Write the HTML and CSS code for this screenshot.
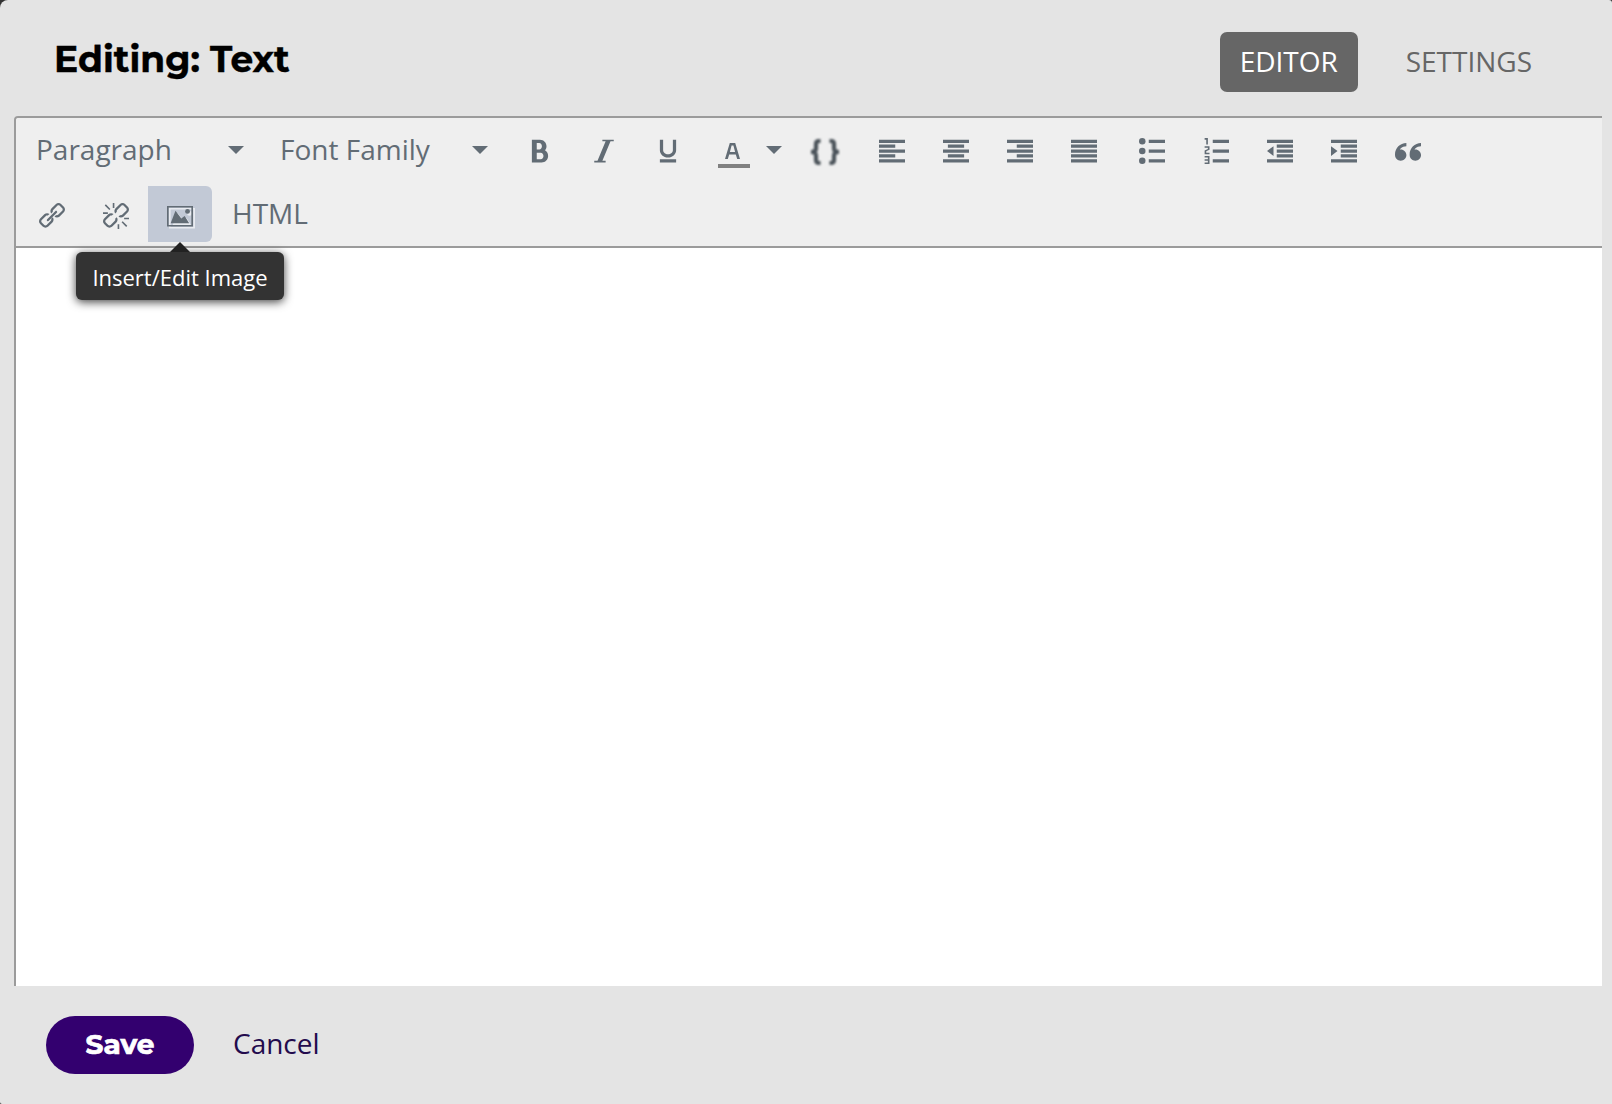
FILE: index.html
```html
<!DOCTYPE html>
<html lang="en">
<head>
<meta charset="utf-8">
<title>Editing: Text</title>
<link rel="stylesheet" href="styles.css">
</head>
<body>
<main class="modal">
  <header class="header">
    <h1 class="title">Editing: Text</h1>
    <nav class="tabs">
      <button class="tab active">EDITOR</button>
      <button class="tab">SETTINGS</button>
    </nav>
  </header>
  <section class="editor">
    <div class="toolbar">
      <div class="row formatting">
        <div class="group">
          <button class="listbox"><span>Paragraph</span><i class="caret"></i></button>
          <button class="listbox"><span>Font Family</span><i class="caret"></i></button>
          <button class="btn"><svg class="icon" viewBox="0 0 1024 1024"><path d="M707.88 484.652c37.498-44.542 60.12-102.008 60.12-164.652 0-141.16-114.842-256-256-256h-320v896h384c141.158 0 256-114.842 256-256 0-92.956-49.798-174.496-124.12-219.348zM384 192h101.5c55.968 0 101.5 57.42 101.5 128s-45.532 128-101.5 128h-101.5v-256zM543 832h-159v-256h159c58.45 0 106 57.42 106 128s-47.55 128-106 128z"/></svg></button>
          <button class="btn"><svg class="icon" viewBox="0 0 1024 1024"><path d="M896 64v64h-128l-320 768h128v64h-448v-64h128l320-768h-128v-64z"/></svg></button>
          <button class="btn"><svg class="icon" viewBox="0 0 1024 1024"><path d="M704 64h128v416c0 159.058-143.268 288-320 288-176.73 0-320-128.942-320-288v-416h128v416c0 40.166 18.238 78.704 51.354 108.506 36.896 33.204 86.846 51.494 140.646 51.494s103.75-18.29 140.646-51.494c33.116-29.802 51.354-68.34 51.354-108.506v-416zM192 832h640v128h-640z"/></svg></button>
          <button class="color-btn">
            <span class="swatch"><svg class="letter" viewBox="0 0 15 16"><path fill-rule="evenodd" d="M0 16L4.8 0h5.4L15 16h-2.8l-1.4-4.6H4.2L2.8 16zM4.9 8.9h5.2L8.4 2.6H6.6z"/></svg></span>
            <i class="caret"></i>
          </button>
          <button class="btn code"><svg class="braces" viewBox="0 0 30 26"><path d="M10.500 2H9Q6 2 6 5v4.500Q6 13 1 13Q6 13 6 16.500V21Q6 24 9 24h1.500M19.500 2H21q3 0 3 3v4.500Q24 13 29 13Q24 13 24 16.500V21q0 3-3 3h-1.500"/></svg></button>
        </div>
        <div class="group">
          <button class="btn"><svg class="icon" viewBox="0 0 16 16"><path d="M0 1h16v2H0zM0 4h10v2H0zM0 7h16v2H0zM0 10h10v2H0zM0 13h16v2H0z"/></svg></button>
          <button class="btn"><svg class="icon" viewBox="0 0 16 16"><path d="M0 1h16v2H0zM3 4h10v2H3zM0 7h16v2H0zM3 10h10v2H3zM0 13h16v2H0z"/></svg></button>
          <button class="btn"><svg class="icon" viewBox="0 0 16 16"><path d="M0 1h16v2H0zM6 4h10v2H6zM0 7h16v2H0zM6 10h10v2H6zM0 13h16v2H0z"/></svg></button>
          <button class="btn"><svg class="icon" viewBox="0 0 16 16"><path d="M0 1h16v2H0zM0 4h16v2H0zM0 7h16v2H0zM0 10h16v2H0zM0 13h16v2H0z"/></svg></button>
        </div>
        <div class="group">
          <button class="btn"><svg class="icon" viewBox="0 0 16 16"><path d="M6 1h10v2H6zM6 7h10v2H6zM6 13h10v2H6z"/><circle cx="2" cy="2" r="2"/><circle cx="2" cy="8" r="2"/><circle cx="2" cy="14" r="2"/></svg></button>
          <button class="btn"><svg class="icon" viewBox="0 0 1024 1024"><path d="M384 832h640v128h-640zM384 448h640v128h-640zM384 64h640v128h-640zM192 0v256h-64v-192h-64v-64zM128 526v50h128v64h-192v-146l128-60v-50h-128v-64h192v146zM256 704v320h-192v-64h128v-64h-128v-64h128v-64h-128v-64z"/></svg></button>
          <button class="btn"><svg class="icon" viewBox="0 0 16 16"><path d="M0 1h16v2H0zM6 4h10v2H6zM6 7h10v2H6zM6 10h10v2H6zM0 13h16v2H0zM4 5v6L0 8z"/></svg></button>
          <button class="btn"><svg class="icon" viewBox="0 0 16 16"><path d="M0 1h16v2H0zM6 4h10v2H6zM6 7h10v2H6zM6 10h10v2H6zM0 13h16v2H0zM0 11V5l4 3z"/></svg></button>
          <button class="btn"><svg class="icon" viewBox="0 0 1024 1024"><path d="M225 448c123.712 0 224 100.29 224 224s-100.288 224-224 224-224-100.288-224-224l-1-32c0-247.424 200.576-448 448-448v128c-85.474 0-165.834 33.286-226.274 93.726-11.634 11.636-22.252 24.016-31.83 37.020 11.438-1.8 23.16-2.746 35.104-2.746zM801 448c123.71 0 224 100.29 224 224s-100.29 224-224 224-224-100.288-224-224l-1-32c0-247.424 200.576-448 448-448v128c-85.474 0-165.834 33.286-226.274 93.726-11.636 11.636-22.254 24.016-31.832 37.020 11.44-1.8 23.16-2.746 35.106-2.746z"/></svg></button>
        </div>
      </div>
      <div class="row">
        <div class="group">
          <button class="btn"><svg class="icon" viewBox="0 0 1024 1024"><path d="M320 704c17.6 17.6 47.274 16.726 65.942-1.942l316.118-316.116c18.668-18.668 19.54-48.342 1.942-65.942s-47.274-16.726-65.942 1.942l-316.116 316.116c-18.668 18.668-19.542 48.342-1.944 65.942z"/><path id="chain" d="M476.888 624.888c4.56 9.05 6.99 19.16 6.99 29.696 0 17.616-6.744 34.06-18.992 46.308l-163.38 163.38c-12.248 12.248-28.694 18.992-46.308 18.992s-34.060-6.744-46.308-18.992l-99.38-99.38c-12.248-12.25-18.992-28.696-18.992-46.308s6.744-34.060 18.992-46.308l163.38-163.382c12.248-12.246 28.696-18.992 46.308-18.992 10.538 0 20.644 2.43 29.696 6.988l65.338-65.336c-27.87-21.656-61.456-32.488-95.034-32.488-39.962 0-79.916 15.286-110.308 45.68l-163.38 163.382c-60.67 60.67-60.67 159.95 0 220.618l99.382 99.382c30.334 30.332 70.32 45.5 110.306 45.5 39.988 0 79.974-15.168 110.308-45.502l163.38-163.38c55.82-55.82 60.238-144.298 13.344-205.346zM978.498 144.888l-99.382-99.382c-30.334-30.336-70.32-45.502-110.308-45.502-39.986 0-79.97 15.166-110.306 45.502l-163.382 163.382c-55.82 55.82-60.238 144.298-13.344 205.346l65.34-65.34c-4.56-9.050-6.988-19.16-6.988-29.696 0-17.616 6.744-34.060 18.992-46.308l163.382-163.382c12.246-12.248 28.694-18.992 46.306-18.992s34.06 6.744 46.308 18.992l99.38 99.382c12.248 12.248 18.992 28.694 18.992 46.308s-6.744 34.060-18.992 46.308l-163.38 163.382c-12.248 12.248-28.694 18.992-46.308 18.992-10.536 0-20.644-2.43-29.696-6.99l-65.338 65.338c27.872 21.656 61.456 32.49 95.034 32.49 39.962 0 79.916-15.286 110.308-45.682l163.38-163.382c60.67-60.666 60.67-159.944 0-220.616z"/></svg></button>
          <button class="btn"><svg class="icon" viewBox="0 0 1024 1024"><use href="#chain"/><path class="rays" d="M90 76l180 180M416 0v192M0 400h192M608 832v192M832 608h192M754 740l180 180"/></svg></button>
          <button class="btn selected">
            <svg class="icon picture" viewBox="0 0 1024 1024"><path fill-rule="evenodd" d="M0 118h1024v808H0zM64 182v680h896V182z"/><circle cx="808" cy="332" r="96"/><path d="M144 798l190-496 230 306 130-98 180 288z"/></svg>
            <span class="tooltip">Insert/Edit Image</span>
          </button>
        </div>
        <div class="group"><button class="text-btn">HTML</button></div>
      </div>
    </div>
    <div class="canvas"></div>
  </section>
  <footer class="footer">
    <button class="save">Save</button>
    <a class="cancel">Cancel</a>
  </footer>
</main>
</body>
</html>
```
FILE: styles.css
```css
* { box-sizing: border-box; }

body {
  margin: 0;
  background: #333;
  font-family: "Open Sans", sans-serif;
  font-size: 28px;
}

button {
  margin: 0;
  padding: 0;
  border: 0;
  background: none;
  color: inherit;
  font: inherit;
}

.modal {
  display: flex;
  flex-direction: column;
  width: 1612px;
  height: 1104px;
  background: #e4e4e4;
  border-radius: 8px 3px 0 2px;
}

.header {
  display: flex;
  justify-content: space-between;
  height: 116px;
  padding: 32px 60px 0 54px;
}

.title {
  margin: 0;
  color: #000;
  font: 700 36px/54px Montserrat, Inter, sans-serif;
  -webkit-text-stroke: 0.4px #000;
}

.tabs {
  display: flex;
  gap: 28px;
}

.tab {
  height: 60px;
  padding: 0 20px 2px;
  border-radius: 7px;
  color: #666;
  line-height: 58px;
}

.tab.active {
  width: 138px;
  background: #666;
  color: #fff;
}

.editor {
  display: flex;
  flex-direction: column;
  height: 870px;
  margin: 0 10px 0 14px;
  border: solid #9b9b9b;
  border-width: 2px 0 0 2px;
  border-top-left-radius: 4px;
}

.toolbar {
  display: flex;
  flex-direction: column;
  gap: 8px;
  height: 130px;
  padding: 4px;
  background: #efefef;
  border-bottom: 2px solid #9b9b9b;
  border-top-left-radius: 2px;
  color: #626c75;
}

.row { display: flex; gap: 4px; height: 56px; }

.group { display: flex; }

.btn {
  position: relative;
  display: flex;
  align-items: center;
  justify-content: center;
  width: 64px;
  height: 56px;
  padding-top: 3px;
}

.formatting .btn { padding-top: 1px; }

.formatting .code {
  width: 63px;
  padding: 3px 0 0 1px;
}

.selected {
  background: #c2c9d6;
  border-radius: 0 6px 6px 0;
}

.icon {
  width: 26px;
  height: 26px;
  fill: #626c75;
  overflow: visible;
}

.picture { filter: drop-shadow(2px 2px 0 #e8ebf0); }

.rays {
  fill: none;
  stroke: #626c75;
  stroke-width: 64;
}

.caret {
  width: 16px;
  height: 8px;
  background: #626c75;
  clip-path: polygon(0 0, 100% 0, 50% 100%);
}

.listbox {
  display: flex;
  align-items: center;
  justify-content: space-between;
  width: 244px;
  height: 56px;
  padding: 0 20px 0 16px;
}

.listbox span {
  height: 56px;
  line-height: 54px;
}

.color-btn {
  display: flex;
  align-items: center;
  gap: 16px;
  width: 93px;
  padding-left: 18px;
}

.swatch {
  display: flex;
  justify-content: center;
  width: 32px;
  height: 25px;
  margin-top: 11px;
  padding-right: 4px;
  border-bottom: 4px solid #808080;
}

.letter { width: 15px; height: 16px; fill: #626c75; }

.braces {
  width: 30px;
  height: 26px;
  fill: none;
  stroke: #4a5259;
  stroke-width: 4.2;
  filter: blur(0.8px);
  overflow: visible;
}

.text-btn {
  height: 56px;
  padding: 0 16px 2px;
  line-height: 54px;
}

.tooltip {
  position: absolute;
  z-index: 1;
  top: 66px;
  left: -72px;
  width: 208px;
  height: 48px;
  border-radius: 6px;
  background: #333;
  box-shadow: 0 2px 10px rgba(0, 0, 0, 0.75);
  color: #fff;
  font-size: 22px;
  line-height: 50px;
  text-align: center;
  white-space: nowrap;
}

.tooltip::before {
  content: "";
  position: absolute;
  top: -10px;
  left: 94px;
  width: 20px;
  height: 10px;
  background: #222;
  clip-path: polygon(0 100%, 50% 0, 100% 100%);
}

.canvas { flex: 1; background: #fff; }

.footer {
  display: flex;
  align-items: center;
  gap: 39px;
  height: 118px;
  padding: 0 46px;
}

.save {
  width: 148px;
  height: 58px;
  padding-bottom: 2px;
  border-radius: 29px;
  background: #33006f;
  color: #fff;
  font: 700 28px/56px Montserrat, Inter, sans-serif;
  -webkit-text-stroke: 0.7px #fff;
}

.cancel {
  padding-bottom: 4px;
  color: #230b4d;
}
```
